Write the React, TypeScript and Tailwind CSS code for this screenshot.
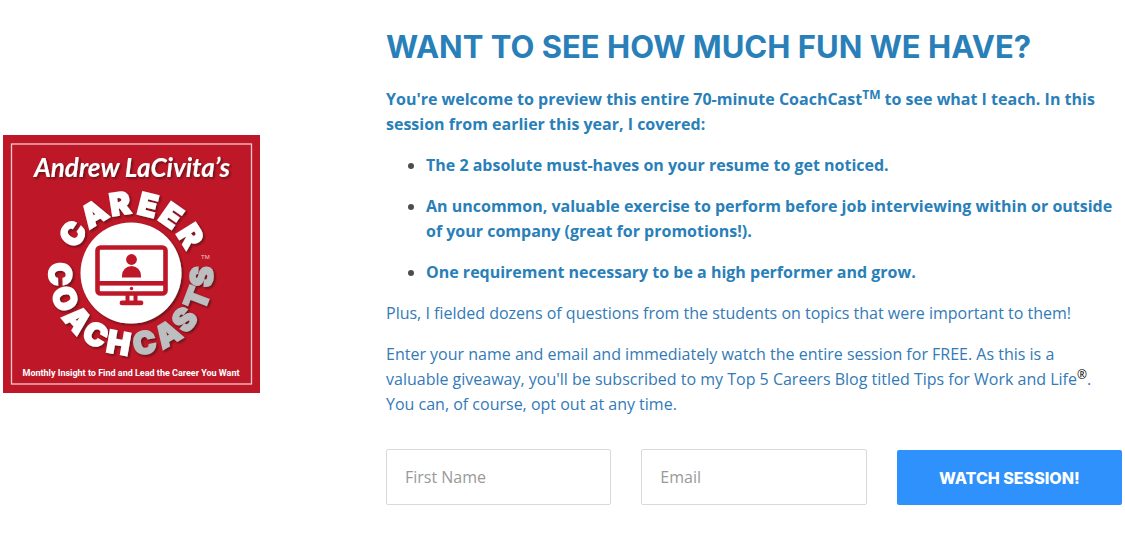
interface Letter {
  char: string
  angle: number
  muted?: boolean
}

const CENTER_X = 128
const CENTER_Y = 138

const topLetters: Letter[] = [
  { char: 'C', angle: -56 },
  { char: 'A', angle: -32 },
  { char: 'R', angle: -9 },
  { char: 'E', angle: 14 },
  { char: 'E', angle: 35 },
  { char: 'R', angle: 58 },
]

const bottomLetters: Letter[] = [
  { char: 'C', angle: 89 },
  { char: 'O', angle: 69 },
  { char: 'A', angle: 49 },
  { char: 'C', angle: 30 },
  { char: 'H', angle: 10 },
  { char: 'C', angle: -11, muted: true },
  { char: 'A', angle: -31, muted: true },
  { char: 'S', angle: -49, muted: true },
  { char: 'T', angle: -69, muted: true },
  { char: 'S', angle: -87, muted: true },
]

const topics = [
  'The 2 absolute must-haves on your resume to get noticed.',
  'An uncommon, valuable exercise to perform before job interviewing within or outside of your company (great for promotions!).',
  'One requirement necessary to be a high performer and grow.',
]

function CoachCastsLogo() {
  return (
    <svg viewBox="0 0 257 258" className="w-full max-w-[257px]" role="img" aria-label="Andrew LaCivita's Career CoachCasts">
      <defs>
        <filter id="shadow" x="-10%" y="-10%" width="120%" height="130%">
          <feDropShadow dx="1.5" dy="1.5" stdDeviation="1" floodColor="#4a0710" floodOpacity="0.8" />
        </filter>
      </defs>
      <rect width="257" height="258" fill="#be1828" />
      <rect x="8.5" y="9" width="240" height="240" fill="none" stroke="#f3c9cd" strokeWidth="1.3" />

      <text
        x="129"
        y="42"
        textAnchor="middle"
        filter="url(#shadow)"
        className="fill-white font-['Lato',sans-serif] text-[26px] font-bold italic"
      >
        Andrew LaCivita’s
      </text>

      <g filter="url(#shadow)" textAnchor="middle" className="font-['Inter',sans-serif] text-[31px] font-black">
        <circle cx={CENTER_X} cy={CENTER_Y} r="50.5" fill="#fff" />
        {topLetters.map((l, i) => (
          <text
            key={i}
            x={CENTER_X}
            y={CENTER_Y - 59}
            fill="#fff"
            stroke="#fff"
            strokeWidth="1.6"
            transform={`rotate(${l.angle} ${CENTER_X} ${CENTER_Y})`}
          >
            {l.char}
          </text>
        ))}
        {bottomLetters.map((l, i) => (
          <text
            key={i}
            x={CENTER_X}
            y={CENTER_Y + 82}
            fill={l.muted ? '#bcbec0' : '#fff'}
            stroke={l.muted ? '#bcbec0' : '#fff'}
            strokeWidth="1.6"
            transform={`rotate(${l.angle} ${CENTER_X} ${CENTER_Y})`}
          >
            {l.char}
          </text>
        ))}
      </g>

      {/* monitor */}
      <g fill="#be1828">
        <rect x="94.5" y="112.5" width="68" height="46" rx="3" fill="none" stroke="#be1828" strokeWidth="4.6" />
        <rect x="94" y="146" width="69" height="4.6" />
        <circle cx="128.5" cy="153.5" r="1.7" />
        <circle cx="128.5" cy="124.5" r="5.4" />
        <path d="M119 142.5v-2a9.5 9.5 0 0 1 19 0v2z" />
        <path d="M122.500 159v6.500h-3.500a2.300 2.300 0 0 0 0 4.800h19a2.300 2.300 0 0 0 0-4.800h-3.500V159h-4v6.500h-4V159z" />
      </g>

      <text x="198" y="124" className="fill-[#f3c9cd] font-['Liberation_Sans',sans-serif] text-[6px]">
        TM
      </text>
      <text x="128" y="241" textAnchor="middle" className="fill-white font-['Roboto',sans-serif] text-[9px] font-bold">
        Monthly Insight to Find and Lead the Career You Want
      </text>
    </svg>
  )
}

export default function App() {
  return (
    <main className="grid grid-cols-3 items-center gap-[30px] bg-white px-[3px] pt-[23px] pb-11 font-['Open_Sans',sans-serif] text-base leading-[25px] text-[#2980b9]">
      <div>
        <CoachCastsLogo />
      </div>

      <section className="col-span-2">
        <h1 className="mb-4 font-['Inter',sans-serif] text-[31px] leading-[48px] font-bold whitespace-nowrap uppercase">
          Want to see how much fun we have?
        </h1>

        <p className="mb-4 font-bold">
          You're welcome to preview this entire 70-minute CoachCast
          <sup className="text-xs leading-none font-bold">TM</sup> to see what I teach. In this session from earlier this year, I covered:
        </p>
        <ul className="mb-4 list-disc space-y-4 pl-10 font-bold marker:text-[#4d4d4d]">
          {topics.map((topic) => (
            <li key={topic}>{topic}</li>
          ))}
        </ul>
        <p className="mb-4 text-[#337ab7]">
          Plus, I fielded dozens of questions from the students on topics that were important to them!
        </p>
        <p className="pr-5 text-[#337ab7]">
          Enter your name and email and immediately watch the entire session for FREE. As this is a valuable giveaway, you'll
          be subscribed to my Top 5 Careers Blog titled Tips for Work and Life
          <sup className="text-xs leading-none text-black">®</sup>. You can, of course, opt out at any time.
        </p>

        <form className="mt-8 grid grid-cols-3 items-end gap-[30px]" onSubmit={(e) => e.preventDefault()}>
          <input
            type="text"
            name="firstName"
            aria-label="First Name"
            placeholder="First Name"
            className="h-14 w-full min-w-0 rounded-xs border border-[#d9d9d9] px-[18px] text-[#555] placeholder:text-[#999]"
          />
          <input
            type="email"
            name="email"
            aria-label="Email"
            placeholder="Email"
            className="h-14 w-full min-w-0 rounded-xs border border-[#d9d9d9] px-[18px] text-[#555] placeholder:text-[#999]"
          />
          <button
            type="submit"
            className="h-[55px] rounded-xs bg-[#2e91fc] font-['Inter',sans-serif] text-base font-extrabold whitespace-nowrap text-white uppercase hover:bg-[#1c82f0]"
          >
            Watch session!
          </button>
        </form>
      </section>
    </main>
  )
}
